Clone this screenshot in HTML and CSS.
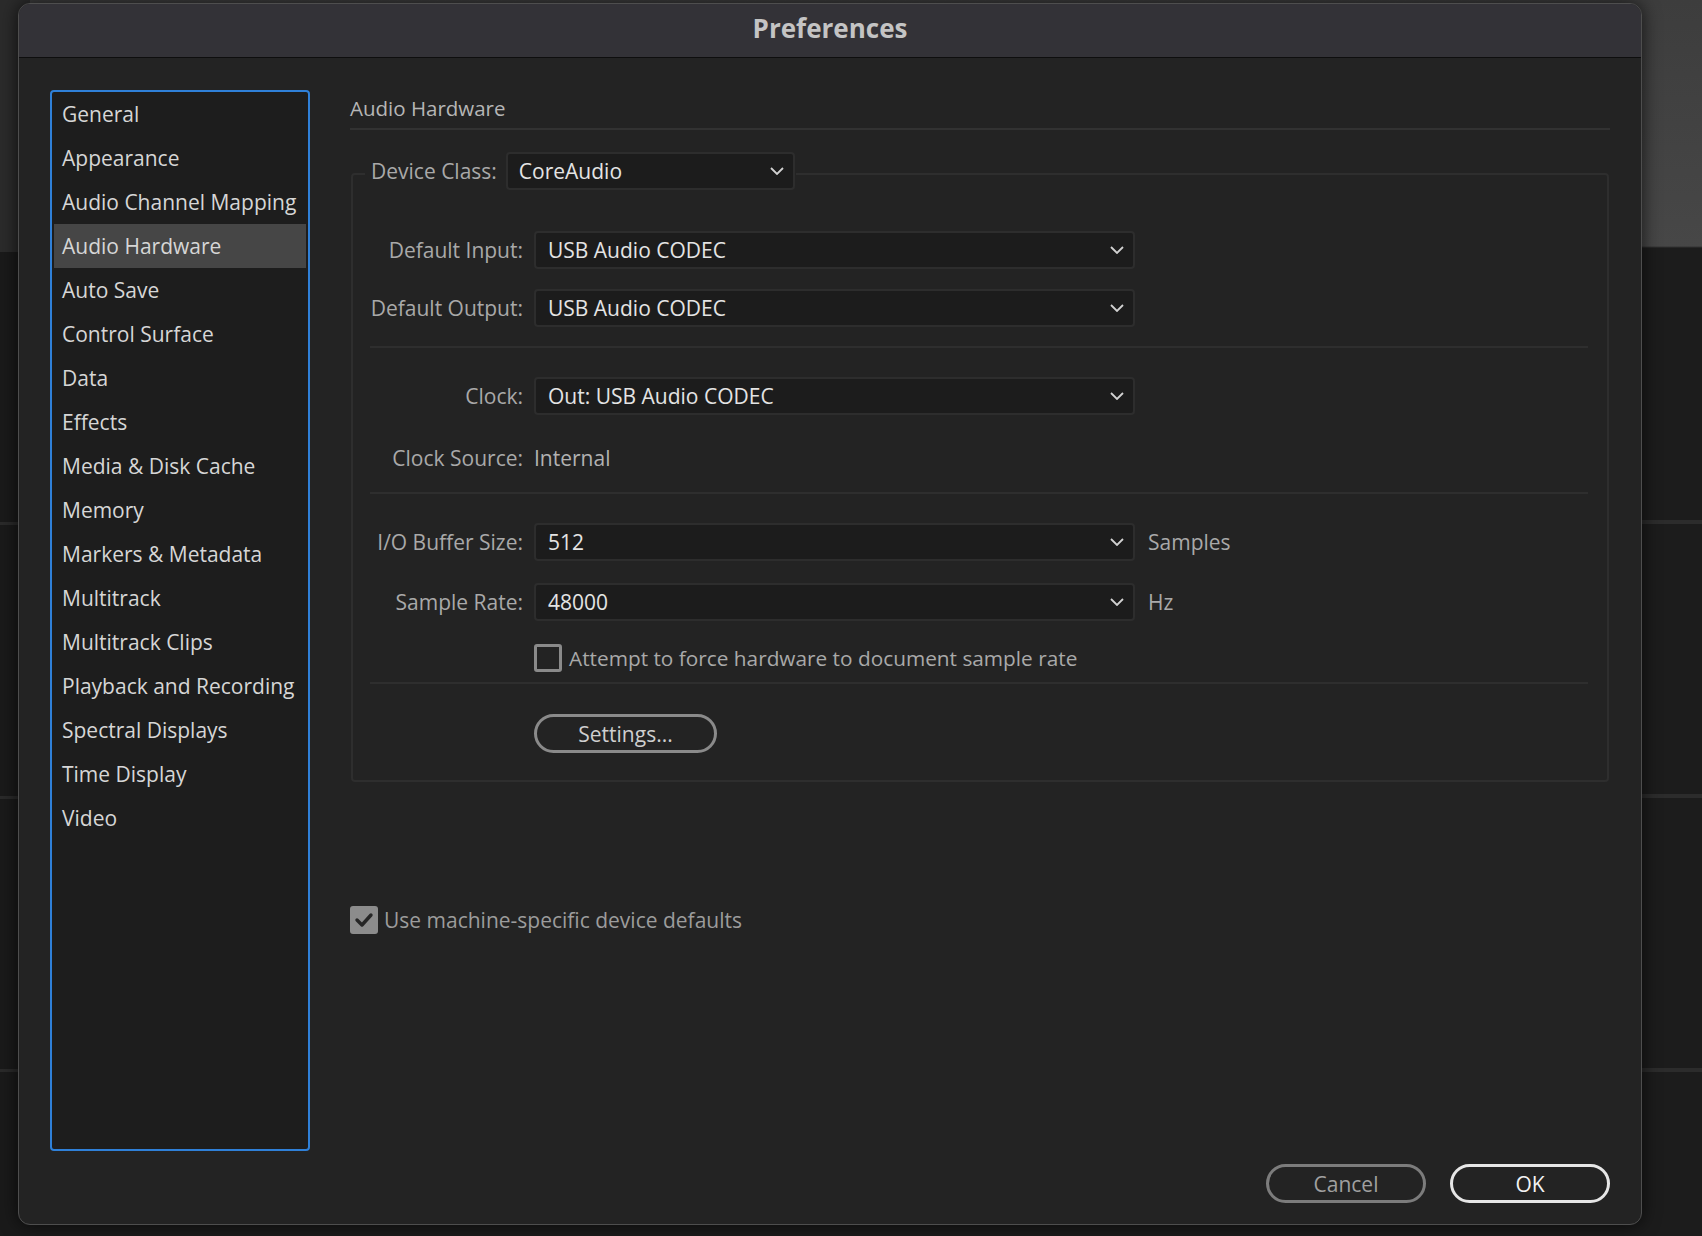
FILE: index.html
```html
<!DOCTYPE html>
<html lang="en">
<head>
<meta charset="utf-8">
<title>Preferences</title>
<link rel="stylesheet" href="styles.css">
</head>
<body>
<div class="window">
  <div class="titlebar">Preferences</div>
  <div class="main">
    <ul class="sidebar">
      <li>General</li>
      <li>Appearance</li>
      <li>Audio Channel Mapping</li>
      <li class="active">Audio Hardware</li>
      <li>Auto Save</li>
      <li>Control Surface</li>
      <li>Data</li>
      <li>Effects</li>
      <li>Media &amp; Disk Cache</li>
      <li>Memory</li>
      <li>Markers &amp; Metadata</li>
      <li>Multitrack</li>
      <li>Multitrack Clips</li>
      <li>Playback and Recording</li>
      <li>Spectral Displays</li>
      <li>Time Display</li>
      <li>Video</li>
    </ul>
    <div class="content">
      <div class="pane-title">Audio Hardware</div>
      <div class="group">
        <div class="legend">
          <span class="legend-label">Device Class:</span>
          <div class="select select-class"><span>CoreAudio</span><svg class="chev" viewBox="0 0 14 8"><polyline points="1,1 7,7 13,1"/></svg></div>
        </div>
        <div class="row r-input">
          <span class="lbl">Default Input:</span>
          <div class="select"><span>USB Audio CODEC</span><svg class="chev" viewBox="0 0 14 8"><polyline points="1,1 7,7 13,1"/></svg></div>
        </div>
        <div class="row r-output">
          <span class="lbl">Default Output:</span>
          <div class="select"><span>USB Audio CODEC</span><svg class="chev" viewBox="0 0 14 8"><polyline points="1,1 7,7 13,1"/></svg></div>
        </div>
        <div class="divider d1"></div>
        <div class="row r-clock">
          <span class="lbl">Clock:</span>
          <div class="select"><span>Out: USB Audio CODEC</span><svg class="chev" viewBox="0 0 14 8"><polyline points="1,1 7,7 13,1"/></svg></div>
        </div>
        <div class="row r-source">
          <span class="lbl">Clock Source:</span>
          <span class="value">Internal</span>
        </div>
        <div class="divider d2"></div>
        <div class="row r-buffer">
          <span class="lbl">I/O Buffer Size:</span>
          <div class="select"><span>512</span><svg class="chev" viewBox="0 0 14 8"><polyline points="1,1 7,7 13,1"/></svg></div>
          <span class="unit">Samples</span>
        </div>
        <div class="row r-rate">
          <span class="lbl">Sample Rate:</span>
          <div class="select"><span>48000</span><svg class="chev" viewBox="0 0 14 8"><polyline points="1,1 7,7 13,1"/></svg></div>
          <span class="unit">Hz</span>
        </div>
        <div class="check-row r-force">
          <span class="checkbox"></span>
          <span class="check-text">Attempt to force hardware to document sample rate</span>
        </div>
        <div class="divider d3"></div>
        <button class="btn settings">Settings...</button>
      </div>
      <div class="machine-row">
        <span class="checkbox checked"><svg viewBox="0 0 28 28"><polyline points="7,14 12,19 21,9"/></svg></span>
        <span class="machine-text">Use machine-specific device defaults</span>
      </div>
    </div>
  </div>
  <div class="footer">
    <button class="btn cancel">Cancel</button>
    <button class="btn ok">OK</button>
  </div>
</div>
</body>
</html>
```

FILE: styles.css
```css
html, body {
  margin: 0;
  padding: 0;
}
body {
  width: 1702px;
  height: 1236px;
  overflow: hidden;
  font-family: "Open Sans", "Noto Sans", sans-serif;
  background-color: #1b1b1b;
  background-image:
    linear-gradient(to bottom, #2b2b2b 0, #2b2b2b 252px, #1a1a1a 252px, #1a1a1a 522px, #2a2a2a 522px, #2a2a2a 525px, #1a1a1a 525px, #1a1a1a 796px, #2a2a2a 796px, #2a2a2a 799px, #1a1a1a 799px, #1a1a1a 1069px, #2a2a2a 1069px, #2a2a2a 1072px, #1a1a1a 1072px),
    linear-gradient(to bottom, #3d3d3d 0, #474747 246px, #1c1c1c 248px, #1c1c1c 520px, #2c2c2c 520px, #2c2c2c 524px, #1c1c1c 524px, #1c1c1c 794px, #2c2c2c 794px, #2c2c2c 798px, #1c1c1c 798px, #1c1c1c 1068px, #2c2c2c 1068px, #2c2c2c 1072px, #1c1c1c 1072px);
  background-size: 30px 100%, 100% 100%;
  background-position: left top, left top;
  background-repeat: no-repeat;
  padding-top: 3px;
  box-sizing: border-box;
}

.window {
  margin-left: 18px;
  width: 1624px;
  height: 1222px;
  box-sizing: border-box;
  background: #232323;
  border: 1px solid #4e4e4e;
  border-radius: 12px;
  box-shadow: 0 0 18px rgba(0, 0, 0, 0.7);
  display: flex;
  flex-direction: column;
  overflow: hidden;
}

.titlebar {
  height: 54px;
  box-sizing: border-box;
  background: #333237;
  border-bottom: 1px solid #0e0e0e;
  color: #c4c4c4;
  font-weight: 700;
  font-size: 26px;
  text-align: center;
  line-height: 49px;
  flex: none;
}

.main {
  display: flex;
  padding: 32px 31px 0 31px;
  flex: none;
}

.sidebar {
  list-style: none;
  margin: 0;
  width: 260px;
  height: 1061px;
  box-sizing: border-box;
  border: 2px solid #2f80d8;
  border-radius: 4px;
  background: #1d1d1d;
  padding: 0 2px;
  flex: none;
}
.sidebar li {
  height: 44px;
  line-height: 44px;
  padding-left: 8px;
  color: #d6d6d6;
  font-size: 21px;
  white-space: nowrap;
}
.sidebar li.active {
  background: #464646;
}

.content {
  flex: 1;
  margin-left: 40px;
}

.pane-title {
  height: 40px;
  box-sizing: border-box;
  line-height: 36px;
  font-size: 20.5px;
  color: #b6b6b6;
  border-bottom: 2px solid #323232;
}

.group {
  margin: 43px 1px 0 1px;
  height: 609px;
  box-sizing: border-box;
  border: 2px solid #2e2e2e;
  border-radius: 4px;
  padding: 0 19px 0 17px;
}

.legend {
  display: flex;
  align-items: center;
  gap: 9px;
  width: max-content;
  margin-top: -23px;
  margin-left: -5px;
  padding: 0 1px 0 6px;
  background: #232323;
}
.legend-label {
  font-size: 21px;
  color: #a9a9a9;
}

.select {
  display: flex;
  align-items: center;
  justify-content: space-between;
  width: 601px;
  height: 38px;
  box-sizing: border-box;
  background: #1c1c1c;
  border: 2px solid #2d2d2d;
  border-radius: 4px;
  padding: 0 9px 0 12px;
  font-size: 21px;
  color: #e4e4e4;
  flex: none;
}
.select-class {
  width: 289px;
  padding-left: 11px;
}
.chev {
  width: 14px;
  height: 8px;
  fill: none;
  stroke: #d2d2d2;
  stroke-width: 1.8;
}

.row {
  display: flex;
  align-items: center;
  height: 38px;
}
.lbl {
  width: 153px;
  text-align: right;
  margin-right: 11px;
  font-size: 21px;
  color: #a9a9a9;
  flex: none;
  white-space: nowrap;
}
.value {
  font-size: 21px;
  color: #b2b2b2;
}
.unit {
  margin-left: 13px;
  font-size: 21px;
  color: #a9a9a9;
}

.r-input { margin-top: 41px; }
.r-output { margin-top: 20px; }
.r-clock { margin-top: 29px; }
.r-source { margin-top: 24px; }
.r-buffer { margin-top: 29px; }
.r-rate { margin-top: 22px; }

.divider {
  height: 2px;
  background: #2e2e2e;
}
.d1 { margin-top: 19px; }
.d2 { margin-top: 15px; }
.d3 { margin-top: 10px; }

.check-row {
  display: flex;
  align-items: center;
  height: 28px;
  margin-top: 23px;
  margin-left: 164px;
}
.checkbox {
  width: 28px;
  height: 28px;
  box-sizing: border-box;
  border: 3px solid #8a8a8a;
  border-radius: 3px;
  flex: none;
  display: block;
}
.checkbox.checked {
  background: #8c8c8c;
  border: none;
}
.checkbox.checked svg {
  width: 28px;
  height: 28px;
  display: block;
  fill: none;
  stroke: #262626;
  stroke-width: 3.4;
  stroke-linecap: round;
  stroke-linejoin: round;
}
.check-text {
  margin-left: 7px;
  font-size: 20.8px;
  color: #a9a9a9;
  white-space: nowrap;
}

.btn {
  font-family: "Open Sans", "Noto Sans", sans-serif;
  font-size: 21px;
  height: 39px;
  box-sizing: border-box;
  background: transparent;
  border-radius: 20px;
  padding: 0;
  cursor: default;
}
.settings {
  display: block;
  margin-top: 30px;
  margin-left: 164px;
  width: 183px;
  border: 3px solid #8a8a8a;
  color: #cfcfcf;
}

.machine-row {
  display: flex;
  align-items: center;
  margin-top: 124px;
  height: 28px;
}
.machine-text {
  margin-left: 6px;
  font-size: 21px;
  color: #9c9c9c;
  white-space: nowrap;
}

.footer {
  display: flex;
  justify-content: flex-end;
  gap: 24px;
  margin-top: 13px;
  padding-right: 31px;
}
.cancel {
  width: 160px;
  border: 3px solid #7c7c7c;
  color: #a0a0a0;
}
.ok {
  width: 160px;
  border: 3px solid #e6e6e6;
  color: #f2f2f2;
}
```
